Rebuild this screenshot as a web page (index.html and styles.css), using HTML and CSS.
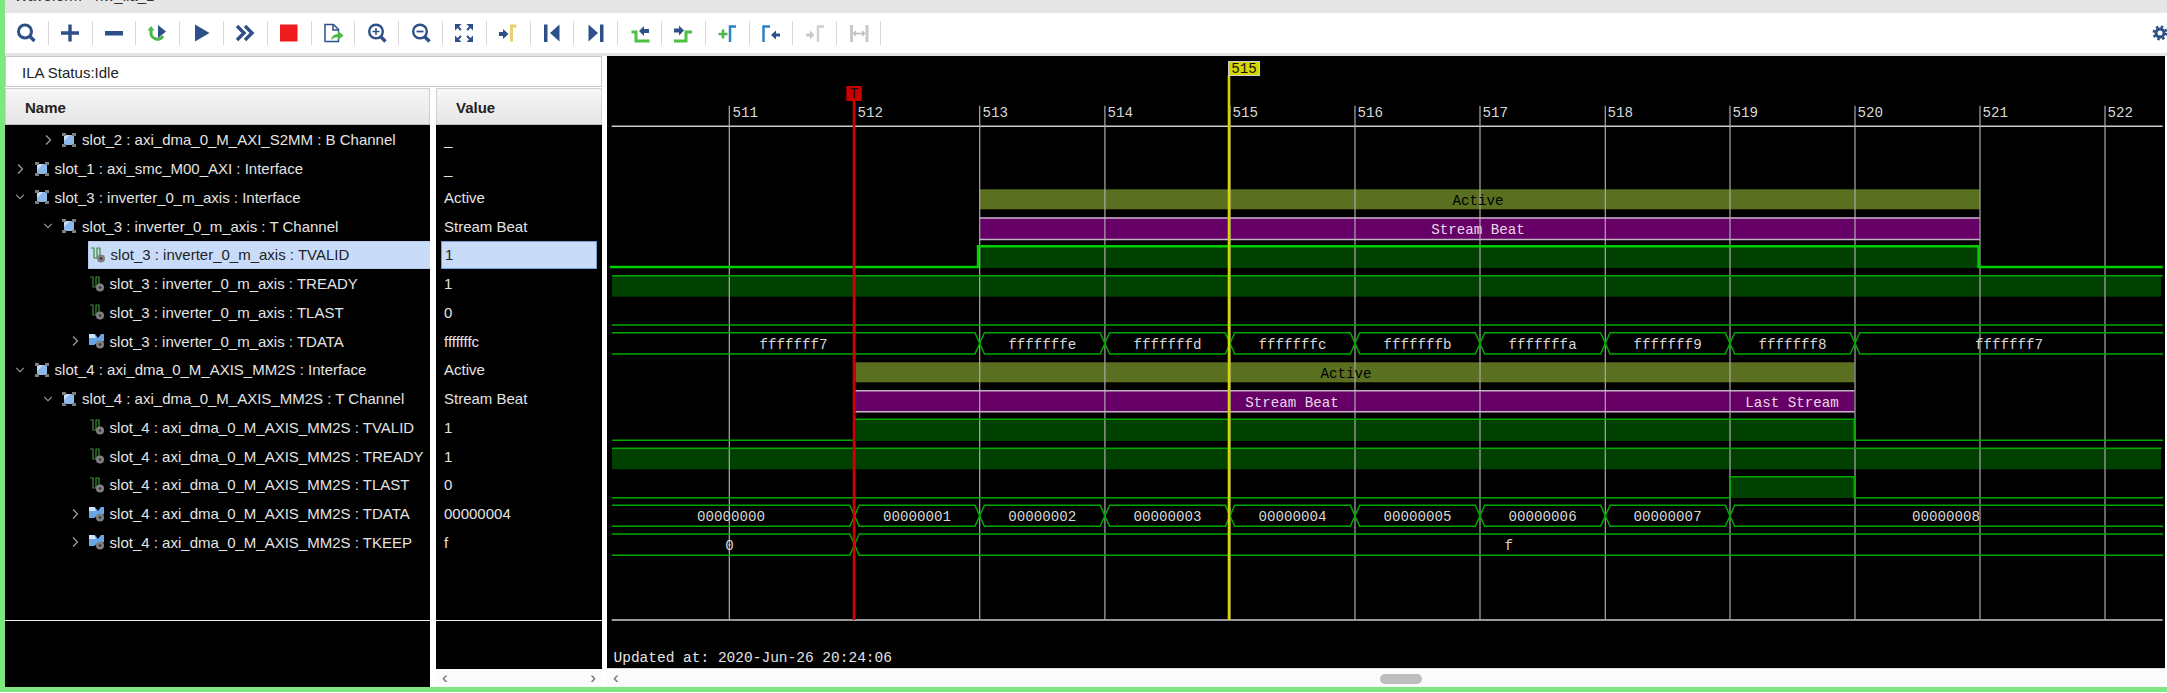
FILE: index.html
```html
<!DOCTYPE html>
<html>
<head>
<meta charset="utf-8">
<title>Waveform - hw_ila_1</title>
<link rel="stylesheet" href="styles.css">
</head>
<body>
<!-- shared icons -->
<svg class="defs" width="0" height="0">
  <symbol id="ico-iface" viewBox="0 0 16 16">
    <rect x="3" y="3" width="10" height="10" fill="#8db9ea"/>
    <path d="M3 3h6L3 9z" fill="#c9def5"/>
    <path d="M1 1h4v3H1zM11 1h4v3h-4zM1 12h4v3H1zM11 12h4v3h-4z" fill="#7d7d7d"/>
  </symbol>
  <symbol id="ico-sig" viewBox="0 0 16 16">
    <path d="M1 1h3v10h3V1h3v7" fill="none" stroke="#3f8a3a" stroke-width="1.200"/>
    <circle cx="11" cy="11.500" r="4" fill="#808080"/>
    <circle cx="11" cy="11.500" r="1.300" fill="#333"/>
  </symbol>
  <symbol id="ico-bus" viewBox="0 0 16 16">
    <path d="M0 1h6l3 4 3-4h3v7l-3 2H8l-3 2H0z" fill="#69a6e6"/>
    <path d="M0 1h5l2 4H0z" fill="#cfe3f8"/>
    <circle cx="11" cy="11.500" r="4" fill="#808080"/>
    <circle cx="11" cy="11.500" r="1.300" fill="#333"/>
  </symbol>
  <symbol id="chev-r" viewBox="0 0 10 12"><path d="M3 1.500l4.500 4.500L3 10.500" fill="none" stroke="#9a9a9a" stroke-width="1.300"/></symbol>
  <symbol id="chev-d" viewBox="0 0 12 10"><path d="M1.500 2.500L6 7l4.500-4.500" fill="none" stroke="#9a9a9a" stroke-width="1.300"/></symbol>
</svg>

<div class="app">
  <div class="titlebar"><span>Waveform - hw_ila_1</span></div>

  <div class="toolbar">
    <div class="tool"><svg viewBox="0 0 24 24"><circle cx="11" cy="10.500" r="6.500" class="ln" stroke-width="3"/><path d="M15.500 15l5 5" class="ln" stroke-width="3.400"/></svg></div>
    <div class="tool"><svg viewBox="0 0 24 24"><path d="M3 12h18M12 3.500v17" class="ln" stroke-width="3.400"/></svg></div>
    <div class="tool"><svg viewBox="0 0 24 24"><rect x="3" y="10" width="18" height="4.500" class="fl"/></svg></div>
    <div class="tool"><svg viewBox="0 0 24 24"><path d="M5 8v3a6.500 6.500 0 0 0 12 4" fill="none" stroke="#4cb748" stroke-width="3"/><path d="M1.500 9.500L5 5l3.500 4.500z" fill="#4cb748"/><polygon points="12,4 20,10.500 12,17" class="fl"/></svg></div>
    <div class="tool"><svg viewBox="0 0 24 24"><polygon points="5,3.500 19.500,12 5,20.500" class="fl"/></svg></div>
    <div class="tool"><svg viewBox="0 0 24 24"><path d="M4 5l7 7-7 7M12 5l7 7-7 7" class="ln" stroke-width="3.400"/></svg></div>
    <div class="tool"><svg viewBox="0 0 24 24"><rect x="3" y="3.500" width="17.500" height="17" fill="#ee1c1c"/></svg></div>
    <div class="tool"><svg viewBox="0 0 24 24"><path d="M4 3.500h8.500l5 5V20.500H4z" fill="#fff" class="thin"/><path d="M12 3.500v5.500h5.500" fill="none" class="thin"/><path d="M10 19q1-6 7-6v-3l5.500 4.500L17 19v-3q-4 0-7 3z" fill="#4cb748"/></svg></div>
    <div class="tool"><svg viewBox="0 0 24 24"><circle cx="11" cy="10.500" r="6.800" class="ln" stroke-width="2.400"/><path d="M15.500 15.500l5 5" class="ln" stroke-width="3.400"/><path d="M7.500 10.500h7M11 7v7" class="ln" stroke-width="1.500"/></svg></div>
    <div class="tool"><svg viewBox="0 0 24 24"><circle cx="11" cy="10.500" r="6.800" class="ln" stroke-width="2.400"/><path d="M15.500 15.500l5 5" class="ln" stroke-width="3.400"/><path d="M7.500 10.500h7" class="ln" stroke-width="1.800"/></svg></div>
    <div class="tool"><svg viewBox="0 0 24 24"><path d="M3 3h6.500L3 9.500zM21 3h-6.500L21 9.500zM3 21h6.500L3 14.500zM21 21h-6.500L21 14.500z" class="fl"/><path d="M5 5l4 4M19 5l-4 4M5 19l4-4M19 19l-4-4" class="ln" stroke-width="2"/></svg></div>
    <div class="tool"><svg viewBox="0 0 24 24"><path d="M3 11h4V8l5.500 5L7 18v-3H3z" class="fl"/><path d="M15.500 20.500V5h5" fill="none" stroke="#e8d070" stroke-width="3"/></svg></div>
    <div class="tool"><svg viewBox="0 0 24 24"><rect x="4" y="3.500" width="3.500" height="17.500" class="fl"/><polygon points="19.500,3.500 10,12 19.500,20.500" class="fl"/></svg></div>
    <div class="tool"><svg viewBox="0 0 24 24"><polygon points="4.500,3.500 14,12 4.500,20.500" class="fl"/><rect x="16" y="3.500" width="3.500" height="17.500" class="fl"/></svg></div>
    <div class="tool"><svg viewBox="0 0 24 24"><path d="M3.500 11H8V20H21.500" fill="none" stroke="#4cc040" stroke-width="3"/><path d="M21 8h-5V5l-5 5 5 5v-3h5z" class="fl"/></svg></div>
    <div class="tool"><svg viewBox="0 0 24 24"><path d="M3 20H15V11H21" fill="none" stroke="#4cc040" stroke-width="3"/><path d="M3 7.500h5V4.500l5 5-5 5v-3H3z" class="fl"/></svg></div>
    <div class="tool"><svg viewBox="0 0 24 24"><path d="M3.500 13h9M8 8.500v9" fill="none" stroke="#4cb748" stroke-width="2.600"/><path d="M15 21V5.500h6" fill="none" stroke="#2f80c0" stroke-width="2.500"/></svg></div>
    <div class="tool"><svg viewBox="0 0 24 24"><path d="M4.500 21V5.500H11" fill="none" stroke="#2f80c0" stroke-width="2.500"/><path d="M21 12.500h-4v-3l-5 4.500 5 4.500v-3h4z" class="fl"/></svg></div>
    <div class="tool"><svg viewBox="0 0 24 24"><path d="M3 12.500h4v-3l4.500 4.500L7 18.500v-3H3z" fill="#c8c8c8"/><path d="M15 21V5.500h6" fill="none" stroke="#d0d0d0" stroke-width="2.500"/></svg></div>
    <div class="tool"><svg viewBox="0 0 24 24"><path d="M4.500 4v17M20 4v17" stroke="#c8c8c8" stroke-width="3"/><path d="M7 12.500h10M9 10l-2.500 2.500L9 15M15 10l2.500 2.500L15 15" fill="none" stroke="#bcbcbc" stroke-width="1.300"/></svg></div>
    <svg class="gear" viewBox="0 0 16 16"><circle cx="8" cy="8" r="4" fill="none" stroke="#2e5088" stroke-width="3"/><circle cx="8" cy="8" r="6.300" fill="none" stroke="#2e5088" stroke-width="2.400" stroke-dasharray="2.500 2.450"/></svg>
  </div>

  <div class="main">
    <div class="side">
      <div class="status">ILA Status:Idle</div>
      <div class="cols">
        <div class="col-name">
          <div class="head">Name</div>
          <div class="rows">
            <div class="row lv1"><svg class="chev"><use href="#chev-r"/></svg><svg class="ico"><use href="#ico-iface"/></svg><span>slot_2 : axi_dma_0_M_AXI_S2MM : B Channel</span></div>
            <div class="row lv0"><svg class="chev"><use href="#chev-r"/></svg><svg class="ico"><use href="#ico-iface"/></svg><span>slot_1 : axi_smc_M00_AXI : Interface</span></div>
            <div class="row lv0"><svg class="chev"><use href="#chev-d"/></svg><svg class="ico"><use href="#ico-iface"/></svg><span>slot_3 : inverter_0_m_axis : Interface</span></div>
            <div class="row lv1"><svg class="chev"><use href="#chev-d"/></svg><svg class="ico"><use href="#ico-iface"/></svg><span>slot_3 : inverter_0_m_axis : T Channel</span></div>
            <div class="row lv2 sel"><i class="chev"></i><svg class="ico"><use href="#ico-sig"/></svg><span>slot_3 : inverter_0_m_axis : TVALID</span></div>
            <div class="row lv2"><i class="chev"></i><svg class="ico"><use href="#ico-sig"/></svg><span>slot_3 : inverter_0_m_axis : TREADY</span></div>
            <div class="row lv2"><i class="chev"></i><svg class="ico"><use href="#ico-sig"/></svg><span>slot_3 : inverter_0_m_axis : TLAST</span></div>
            <div class="row lv2"><svg class="chev"><use href="#chev-r"/></svg><svg class="ico"><use href="#ico-bus"/></svg><span>slot_3 : inverter_0_m_axis : TDATA</span></div>
            <div class="row lv0"><svg class="chev"><use href="#chev-d"/></svg><svg class="ico"><use href="#ico-iface"/></svg><span>slot_4 : axi_dma_0_M_AXIS_MM2S : Interface</span></div>
            <div class="row lv1"><svg class="chev"><use href="#chev-d"/></svg><svg class="ico"><use href="#ico-iface"/></svg><span>slot_4 : axi_dma_0_M_AXIS_MM2S : T Channel</span></div>
            <div class="row lv2"><i class="chev"></i><svg class="ico"><use href="#ico-sig"/></svg><span>slot_4 : axi_dma_0_M_AXIS_MM2S : TVALID</span></div>
            <div class="row lv2"><i class="chev"></i><svg class="ico"><use href="#ico-sig"/></svg><span>slot_4 : axi_dma_0_M_AXIS_MM2S : TREADY</span></div>
            <div class="row lv2"><i class="chev"></i><svg class="ico"><use href="#ico-sig"/></svg><span>slot_4 : axi_dma_0_M_AXIS_MM2S : TLAST</span></div>
            <div class="row lv2"><svg class="chev"><use href="#chev-r"/></svg><svg class="ico"><use href="#ico-bus"/></svg><span>slot_4 : axi_dma_0_M_AXIS_MM2S : TDATA</span></div>
            <div class="row lv2"><svg class="chev"><use href="#chev-r"/></svg><svg class="ico"><use href="#ico-bus"/></svg><span>slot_4 : axi_dma_0_M_AXIS_MM2S : TKEEP</span></div>
          </div>
          <div class="foot"></div>
        </div>
        <div class="col-value">
          <div class="head">Value</div>
          <div class="rows">
            <div class="row val">_</div>
            <div class="row val">_</div>
            <div class="row val">Active</div>
            <div class="row val">Stream Beat</div>
            <div class="row val cur">1</div>
            <div class="row val">1</div>
            <div class="row val">0</div>
            <div class="row val">fffffffc</div>
            <div class="row val">Active</div>
            <div class="row val">Stream Beat</div>
            <div class="row val">1</div>
            <div class="row val">1</div>
            <div class="row val">0</div>
            <div class="row val">00000004</div>
            <div class="row val">f</div>
          </div>
          <div class="foot short"></div>
          <div class="hscroll"><span>&#8249;</span><span>&#8250;</span></div>
        </div>
      </div>
    </div>

    <div class="wave">
      <!-- viewBox uses the same numbers as the window so times and rows read directly -->
      <svg class="plot" viewBox="607 56 1558 612">
        <!-- fills -->
        <rect x="979.700" y="189.300" width="1000" height="20" class="olive"/>
        <rect x="979.700" y="217.300" width="1000" height="22.700" class="purple"/>
        <rect x="979.700" y="247" width="999" height="21" class="dark"/>
        <rect x="612" y="275.700" width="1549" height="21" class="dark"/>
        <rect x="855.500" y="362.300" width="999" height="20" class="olive"/>
        <rect x="855.500" y="390" width="999" height="22.300" class="purple"/>
        <rect x="855.500" y="420" width="999" height="21" class="dark"/>
        <rect x="612" y="448.300" width="1549" height="21" class="dark"/>
        <rect x="1730" y="477" width="124.500" height="21" class="dark"/>

        <!-- time scale -->
        <path class="scale" d="M611.700 126.300H2162.700M611.700 620H2162.700"/>
        <path class="tick" d="M729.300 105.700V620M854.500 105.700V620M979.700 105.700V620M1104.900 105.700V620M1230 105.700V620M1355 105.700V620M1480 105.700V620M1605.300 105.700V620M1730 105.700V620M1855 105.700V620M1980 105.700V620M2105 105.700V620"/>
        <text class="lbl" x="732.500" y="117">511</text>
        <text class="lbl" x="857.500" y="117">512</text>
        <text class="lbl" x="982.500" y="117">513</text>
        <text class="lbl" x="1107.500" y="117">514</text>
        <text class="lbl" x="1232.500" y="117">515</text>
        <text class="lbl" x="1357.500" y="117">516</text>
        <text class="lbl" x="1482.500" y="117">517</text>
        <text class="lbl" x="1607.500" y="117">518</text>
        <text class="lbl" x="1732.500" y="117">519</text>
        <text class="lbl" x="1857.500" y="117">520</text>
        <text class="lbl" x="1982.500" y="117">521</text>
        <text class="lbl" x="2107.500" y="117">522</text>

        <!-- purple edges -->
        <path class="edge" d="M979.700 218H1979.700M979.700 239.500H1979.700M855.500 390.700H1854.500M855.500 411.700H1854.500"/>

        <!-- slot_3 -->
        <path class="hi" d="M610 267H978V246.300H1978.500V267H2162.700"/>
        <path class="sig" d="M612 275.700H2162.700"/>
        <path class="sig" d="M611.700 325H2162.700"/>
        <path class="sig" d="M612 332.700H975L984.400 354H1100.200L1109.600 332.700H1225.300L1234.700 354H1350.300L1359.700 332.700H1475.300L1484.700 354H1600.600L1610 332.700H1725.300L1734.700 354H1850.300L1859.700 332.700H2163"/>
        <path class="sig" d="M612 354H975L984.400 332.700H1100.200L1109.600 354H1225.300L1234.700 332.700H1350.300L1359.700 354H1475.300L1484.700 332.700H1600.600L1610 354H1725.300L1734.700 332.700H1850.300L1859.700 354H2163"/>

        <!-- slot_4 -->
        <path class="sig" d="M612 440.300H854V419.300H1854.200V440.300H2163"/>
        <path class="sig" d="M612 448.300H2161.700"/>
        <path class="sig" d="M612 497.700H1730V476.700H1854.200V497.700H2163"/>
        <path class="sig" d="M612 505.300H849.800L859.200 526.300H975L984.400 505.300H1100.200L1109.600 526.300H1225.300L1234.700 505.300H1350.300L1359.700 526.300H1475.300L1484.700 505.300H1600.600L1610 526.300H1725.300L1734.700 505.300H2163"/>
        <path class="sig" d="M612 526.300H849.800L859.200 505.300H975L984.400 526.300H1100.200L1109.600 505.300H1225.300L1234.700 526.300H1350.300L1359.700 505.300H1475.300L1484.700 526.300H1600.600L1610 505.300H1725.300L1734.700 526.300H2163"/>
        <path class="sig" d="M612 534H849.800L859.200 555.300H2163"/>
        <path class="sig" d="M612 555.300H849.800L859.200 534H2163"/>

        <!-- values -->
        <text class="dk mid" x="1478" y="205">Active</text>
        <text class="lt mid" x="1478" y="233.500">Stream Beat</text>
        <text class="val-t mid" x="793.500" y="348.500">fffffff7</text>
        <text class="val-t mid" x="1042.300" y="348.500">fffffffe</text>
        <text class="val-t mid" x="1167.500" y="348.500">fffffffd</text>
        <text class="val-t mid" x="1292.500" y="348.500">fffffffc</text>
        <text class="val-t mid" x="1417.500" y="348.500">fffffffb</text>
        <text class="val-t mid" x="1542.600" y="348.500">fffffffa</text>
        <text class="val-t mid" x="1667.600" y="348.500">fffffff9</text>
        <text class="val-t mid" x="1792.500" y="348.500">fffffff8</text>
        <text class="val-t mid" x="2009" y="348.500">fffffff7</text>
        <text class="dk mid" x="1346" y="377.500">Active</text>
        <text class="lt mid" x="1292" y="406.500">Stream Beat</text>
        <text class="lt mid" x="1792" y="406.500">Last Stream</text>
        <text class="val-t mid" x="731" y="521">00000000</text>
        <text class="val-t mid" x="917" y="521">00000001</text>
        <text class="val-t mid" x="1042.300" y="521">00000002</text>
        <text class="val-t mid" x="1167.500" y="521">00000003</text>
        <text class="val-t mid" x="1292.500" y="521">00000004</text>
        <text class="val-t mid" x="1417.500" y="521">00000005</text>
        <text class="val-t mid" x="1542.600" y="521">00000006</text>
        <text class="val-t mid" x="1667.600" y="521">00000007</text>
        <text class="val-t mid" x="1946" y="521">00000008</text>
        <text class="val-t mid" x="729.500" y="550">0</text>
        <text class="val-t mid" x="1508.800" y="550">f</text>

        <!-- markers -->
        <path class="cur-r" d="M854 100V620"/>
        <rect x="846.300" y="86" width="15.400" height="15" fill="#c80000"/>
        <text class="mark mid" x="854" y="98">T</text>
        <path class="cur-y" d="M1229 75V620"/>
        <rect x="1228.500" y="61.500" width="31" height="14" fill="#d6d600" stroke="#ccc"/>
        <text class="mark mid" x="1244" y="73">515</text>

        <text class="stamp" x="613.500" y="662">Updated at: 2020-Jun-26 20:24:06</text>
      </svg>
      <div class="hscroll wide"><span>&#8249;</span><b class="thumb"></b></div>
    </div>
  </div>
</div>
</body>
</html>
```

FILE: styles.css
```css
* {
  margin: 0;
  padding: 0;
  box-sizing: border-box;
}
body {
  width: 2167px;
  height: 693px;
  overflow: hidden;
  background: #fff;
  font-family: "Liberation Sans", Arial, sans-serif;
}
.defs {
  display: block;
  height: 0;
}
.app {
  height: 692px;
  border-left: 5px solid #7fe77f;
  border-bottom: 5px solid #7fe77f;
}

/* title strip, text is cut off by the top of the shot */
.titlebar {
  height: 13px;
  background: #e6e6e6;
  overflow: hidden;
  font-size: 15px;
  color: #333;
  padding-left: 9px;
}
.titlebar span {
  display: block;
  margin-top: -13px;
}

/* toolbar */
.toolbar {
  height: 43px;
  display: flex;
  align-items: flex-start;
  padding-top: 8px;
  background: #fff;
  border-bottom: 3px solid #e4e4e4;
}
.tool {
  width: 43.8px;
  height: 24px;
  flex: none;
  display: flex;
  justify-content: center;
  border-right: 1px solid #d8d8d8;
}
.tool svg {
  width: 24px;
  height: 24px;
}
.ln {
  fill: none;
  stroke: #2e5088;
}
.fl {
  fill: #2e5088;
}
.thin {
  stroke: #2e5088;
  stroke-width: 1.5;
}
.gear {
  width: 16px;
  height: 16px;
  margin: 4px -1px 0 auto;
}

/* main split */
.main {
  display: flex;
  gap: 5px;
  height: 631px;
}
.side {
  width: 597px;
  display: flex;
  flex-direction: column;
  gap: 1px;
}
.status {
  height: 31px;
  line-height: 32px;
  padding-left: 16px;
  font-size: 15px;
  color: #222;
  border: 1px solid #c8c8c8;
  background: #fff;
}
.cols {
  flex: 1;
  display: flex;
  gap: 6px;
}
.col-name {
  width: 425px;
  display: flex;
  flex-direction: column;
}
.col-value {
  width: 166px;
  display: flex;
  flex-direction: column;
}
.head {
  height: 37px;
  line-height: 38px;
  font-size: 15px;
  font-weight: bold;
  color: #222;
  padding-left: 19px;
  background: linear-gradient(#f6f6f6, #e6e6e6);
  border: 1px solid #cfcfcf;
  border-bottom: 1px solid #bdbdbd;
}
.rows {
  height: 495px;
  padding-top: 0.6px;
  background: #000;
  border-bottom: 1px solid #000;
}
.foot {
  flex: 1;
  background: #000;
  border-top: 1.5px solid #f0f0f0;
}
.foot.short {
  flex: none;
  height: 49px;
}
.row {
  height: 28.74px;
  display: flex;
  align-items: center;
  font-size: 15px;
  color: #e4e4e4;
  white-space: nowrap;
}
.chev {
  width: 10px;
  height: 12px;
  flex: none;
  margin-right: 8.6px;
}
.ico {
  width: 16px;
  height: 16px;
  flex: none;
  margin-right: 5px;
}
.lv0 {
  padding-left: 10px;
}
.lv1 {
  padding-left: 37.5px;
}
.lv2 {
  padding-left: 65px;
}
.row.sel {
  margin-left: 83px;
  padding-left: 0;
  color: #222;
  background: #c8dcfa;
  border: 1px solid #b5cbe8;
  border-right: 0;
}
.row.sel .chev {
  display: none;
}
.row.sel .ico {
  margin-left: 0.6px;
}
.val {
  padding-left: 8px;
}
.val.cur {
  margin: 0 5px;
  padding-left: 3px;
  color: #222;
  background: #c8dcfa;
  border: 1.5px solid #6f9fd4;
}

/* horizontal scroll strips */
.hscroll {
  flex: 1;
  display: flex;
  justify-content: space-between;
  align-items: center;
  padding: 0 6px;
  background: #fbfbfb;
  font-size: 17px;
  line-height: 16px;
  color: #666;
}
.hscroll.wide {
  position: relative;
  height: 19px;
  flex: none;
  justify-content: flex-start;
  border-top: 1px solid #ddd;
}
.thumb {
  position: absolute;
  left: 773px;
  top: 5px;
  width: 42px;
  height: 10px;
  border-radius: 5px;
  background: #bdbdbd;
}

/* waveform */
.wave {
  width: 1558px;
  flex: none;
}
.plot {
  display: block;
  width: 1558px;
  height: 612px;
  background: #000;
}
.plot text {
  font-family: "Liberation Mono", "Courier New", monospace;
  font-size: 14.2px;
}
.olive {
  fill: #5a7020;
}
.purple {
  fill: #660066;
}
.dark {
  fill: #004000;
}
.scale {
  stroke: #ccc;
  stroke-width: 1.5;
  fill: none;
}
.tick {
  stroke: #aaa;
  stroke-width: 1.2;
  fill: none;
}
.edge {
  stroke: #c4b4c4;
  stroke-width: 1.5;
  fill: none;
}
.hi {
  stroke: #00d000;
  stroke-width: 2.4;
  fill: none;
}
.sig {
  stroke: #00a800;
  stroke-width: 1.5;
  fill: none;
}
.cur-r {
  stroke: #d00000;
  stroke-width: 2.6;
}
.cur-y {
  stroke: #d4d400;
  stroke-width: 2.6;
}
.plot .lbl,
.plot .val-t {
  fill: #d8d8d8;
}
.plot .lt {
  fill: #e8d8e8;
}
.plot .dk {
  fill: #000;
}
.plot .mark {
  fill: #111;
}
.plot .stamp {
  fill: #e4e4e4;
  font-size: 14.5px;
}
.mid {
  text-anchor: middle;
}
```
